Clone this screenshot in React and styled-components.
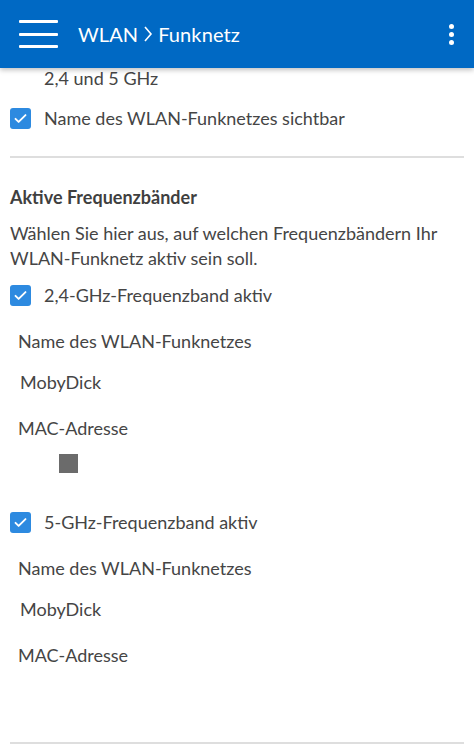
import React from "react";
import styled, { createGlobalStyle } from "styled-components";

const Global = createGlobalStyle`
  html, body { margin: 0; padding: 0; background: #fff; }
  body { font-family: Lato, "Noto Sans", sans-serif; color: #454545; }
  * { box-sizing: border-box; }
`;

const Page = styled.div`
  width: 474px;
  height: 750px;
  overflow: hidden;
  background: #fff;
  display: flex;
  flex-direction: column;
`;

const AppBar = styled.header`
  height: 68px;
  flex: none;
  background: #0069c4;
  display: flex;
  align-items: center;
  padding: 0 16px 0 19px;
  box-shadow: 0 2px 5px rgba(0, 0, 0, 0.25);
  position: relative;
  z-index: 1;
`;

const Burger = styled.div`
  width: 39px;
  height: 28px;
  display: flex;
  flex-direction: column;
  justify-content: space-between;
  margin-right: 20px;
  span {
    display: block;
    height: 3px;
    background: #fff;
    border-radius: 1px;
  }
`;

const Title = styled.h1`
  margin: 0;
  flex: 1;
  font-size: 20px;
  font-weight: 400;
  color: #fff;
  display: flex;
  align-items: center;
  gap: 5px;
  letter-spacing: 0.1px;
`;

const Kebab = styled.div`
  display: flex;
  flex-direction: column;
  gap: 3px;
  margin-right: 4px;
  span {
    width: 5px;
    height: 5px;
    border-radius: 50%;
    background: #fff;
  }
`;

const Content = styled.main`
  padding: 0 10px;
  flex: 1;
  display: flex;
  flex-direction: column;
`;

const Indented = styled.div`
  padding-left: 34px;
  font-size: 18px;
  line-height: 22px;
  margin-top: ${(p) => p.$mt || 0}px;
`;

const CheckRow = styled.label`
  display: flex;
  align-items: center;
  gap: 13px;
  font-size: 18px;
  line-height: 22px;
  margin-top: ${(p) => p.$mt || 0}px;
`;

const Box = styled.span`
  width: 21px;
  height: 21px;
  border-radius: 3px;
  background: #2d8ae0;
  display: flex;
  align-items: center;
  justify-content: center;
  flex: none;
`;

const Divider = styled.hr`
  border: none;
  border-top: 2px solid #dedede;
  margin: ${(p) => p.$mt || 0}px 0 0;
`;

const SectionTitle = styled.h2`
  margin: ${(p) => p.$mt || 0}px 0 0;
  font-size: 18px;
  font-weight: 700;
  line-height: 22px;
  color: #3f3f3f;
`;

const Para = styled.p`
  margin: ${(p) => p.$mt || 0}px 0 0;
  font-size: 18px;
  line-height: 25px;
`;

const Field = styled.div`
  padding-left: ${(p) => p.$pl || 8}px;
  font-size: 18px;
  line-height: 22px;
  margin-top: ${(p) => p.$mt || 0}px;
`;

const MacBlock = styled.div`
  margin: ${(p) => p.$mt || 0}px 0 0 49px;
  width: 19px;
  height: 19px;
  background: #6b6b6b;
`;

const Check = () => (
  <Box>
    <svg width="15" height="15" viewBox="0 0 24 24" fill="none" stroke="#fff" strokeWidth="3" strokeLinecap="round" strokeLinejoin="round">
      <path d="M4 12.5l5 5L20 6.5" />
    </svg>
  </Box>
);

export default function App() {
  return (
    <Page>
      <Global />
      <AppBar>
        <Burger>
          <span />
          <span />
          <span />
        </Burger>
        <Title>
          WLAN
          <svg width="10" height="18" viewBox="0 0 10 18" fill="none" stroke="#fff" strokeWidth="1.6">
            <path d="M2 2l6 7-6 7" />
          </svg>
          Funknetz
        </Title>
        <Kebab>
          <span />
          <span />
          <span />
        </Kebab>
      </AppBar>
      <Content>
        <Indented $mt={-1}>2,4 und 5 GHz</Indented>
        <CheckRow $mt={18}>
          <Check />
          Name des WLAN-Funknetzes sichtbar
        </CheckRow>
        <Divider $mt={27} />
        <SectionTitle $mt={28}>Aktive Frequenzbänder</SectionTitle>
        <Para $mt={13}>
          Wählen Sie hier aus, auf welchen Frequenzbändern Ihr
          <br />
          WLAN-Funknetz aktiv sein soll.
        </Para>
        <CheckRow $mt={13}>
          <Check />
          2,4-GHz-Frequenzband aktiv
        </CheckRow>
        <Field $mt={24}>Name des WLAN-Funknetzes</Field>
        <Field $mt={19} $pl={10}>MobyDick</Field>
        <Field $mt={24}>MAC-Adresse</Field>
        <MacBlock $mt={15} />
        <CheckRow $mt={38}>
          <Check />
          5-GHz-Frequenzband aktiv
        </CheckRow>
        <Field $mt={24}>Name des WLAN-Funknetzes</Field>
        <Field $mt={19} $pl={10}>MobyDick</Field>
        <Field $mt={24}>MAC-Adresse</Field>
        <Divider $mt={76} />
      </Content>
    </Page>
  );
}
